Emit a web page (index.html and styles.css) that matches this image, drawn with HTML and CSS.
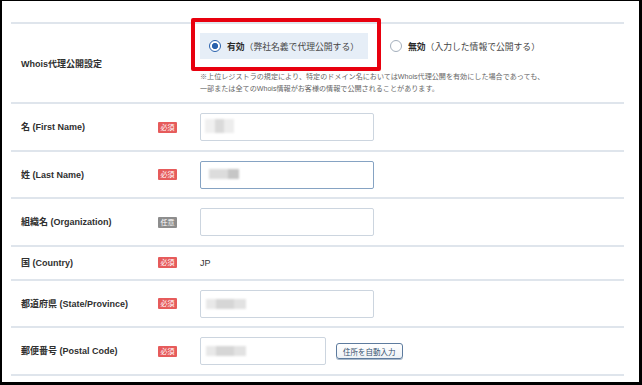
FILE: index.html
```html
<!DOCTYPE html>
<html lang="ja">
<head>
	<meta charset="utf-8">
	<title>Whois情報設定</title>
	<link rel="stylesheet" href="styles.css">
</head>
<body>
	<div class="frame">
		<div class="form-table">
			<div class="row row-whois">
				<div class="label">Whois代理公開設定</div>
				<div class="badge-cell"></div>
				<div class="value">
					<div class="options">
						<div class="option checked">
							<span class="radio"></span>
							<span><b>有効</b>（弊社名義で代理公開する）</span>
							<span class="highlight"></span>
						</div>
						<div class="option">
							<span class="radio"></span>
							<span><b>無効</b>（入力した情報で公開する）</span>
						</div>
					</div>
					<p class="note">※上位レジストラの規定により、特定のドメイン名においてはWhois代理公開を有効にした場合であっても、<br>一部または全てのWhois情報がお客様の情報で公開されることがあります。</p>
				</div>
			</div>

			<div class="row">
				<div class="label">名 (First Name)</div>
				<div class="badge-cell"><span class="badge">必須</span></div>
				<div class="value">
					<div class="field"><span class="blur blur-a"></span></div>
				</div>
			</div>

			<div class="row">
				<div class="label">姓 (Last Name)</div>
				<div class="badge-cell"><span class="badge">必須</span></div>
				<div class="value">
					<div class="field focus"><span class="blur blur-b"></span></div>
				</div>
			</div>

			<div class="row">
				<div class="label">組織名 (Organization)</div>
				<div class="badge-cell"><span class="badge optional">任意</span></div>
				<div class="value">
					<div class="field"></div>
				</div>
			</div>

			<div class="row row-text">
				<div class="label">国 (Country)</div>
				<div class="badge-cell"><span class="badge">必須</span></div>
				<div class="value country">JP</div>
			</div>

			<div class="row">
				<div class="label">都道府県 (State/Province)</div>
				<div class="badge-cell"><span class="badge">必須</span></div>
				<div class="value">
					<div class="field"><span class="blur blur-c"></span></div>
				</div>
			</div>

			<div class="row">
				<div class="label">郵便番号 (Postal Code)</div>
				<div class="badge-cell"><span class="badge">必須</span></div>
				<div class="value value-inline">
					<div class="field short"><span class="blur blur-c"></span></div>
					<button class="btn-auto">住所を自動入力</button>
				</div>
			</div>

			<div class="row row-next">
				<div class="label"></div>
				<div class="badge-cell"></div>
				<div class="value">
					<div class="field"></div>
				</div>
			</div>
		</div>
	</div>
</body>
</html>
```

FILE: styles.css
```css
*{
	margin: 0;
	padding: 0;
	box-sizing: border-box;
}
body{
	font-family: "Liberation Sans", "Noto Sans CJK JP", sans-serif;
	color: #333333;
	background: #ffffff;
}
.frame{
	width: 642px;
	height: 385px;
	border-style: solid;
	border-color: #000000;
	border-width: 1px 3px 3px 2px;
	overflow: hidden;
	background: #ffffff;
}
.form-table{
	margin: 21px 0 0 9px;
	width: 613px;
}
.row{
	display: grid;
	grid-template-columns: 137px 42px 1fr;
	align-items: center;
	padding: 9px 0 8.5px 10px;
	border-top: 2px solid #dfe5ec;
}
.row-whois{
	padding-bottom: 7px;
}
.row-text{
	padding: 10px 0 10px 10px;
}
.label{
	font-size: 9px;
	line-height: 12px;
	font-weight: bold;
	color: #2f2f2f;
	white-space: nowrap;
}
.badge-cell{
	display: flex;
	align-items: center;
}
.badge{
	display: block;
	width: 19px;
	height: 11px;
	line-height: 11px;
	font-size: 7px;
	text-align: center;
	color: #ffffff;
	background: #e65b5b;
	border-radius: 1px;
}
.badge.optional{
	background: #8d8d8d;
}
.options{
	display: flex;
	gap: 13px;
}
.option{
	position: relative;
	display: flex;
	align-items: center;
	gap: 6px;
	height: 26px;
	padding: 0 9px;
	font-size: 8.8px;
	color: #444444;
	white-space: nowrap;
}
.option b{
	color: #2a2a2a;
}
.option.checked{
	background: #e6eef7;
}
.radio{
	width: 12px;
	height: 12px;
	border-radius: 50%;
	border: 1px solid #a4afbc;
	background: #ffffff;
	flex: none;
}
.option.checked .radio{
	border: 1.5px solid #2a62ad;
	background: radial-gradient(circle, #2a62ad 0 2.8px, #ffffff 3.3px);
}
.highlight{
	position: absolute;
	left: -9px;
	top: -15px;
	right: -13px;
	bottom: -12px;
	border: 4px solid #e8000e;
	border-radius: 2px;
}
.note{
	margin-top: 12px;
	font-size: 7.1px;
	line-height: 12px;
	color: #666666;
	white-space: nowrap;
}
.field{
	display: flex;
	align-items: center;
	width: 174px;
	height: 28px;
	padding-left: 5px;
	border: 1px solid #ccd5df;
	border-radius: 2px;
	background: #ffffff;
}
.field.focus{
	border-color: #86a3c3;
}
.field.short{
	width: 126px;
}
.blur{
	display: block;
	height: 10px;
	filter: blur(1px);
}
.blur-a{
	width: 29px;
	height: 14px;
	margin-top: -3px;
	margin-left: -1px;
	background: linear-gradient(90deg, #f0f0f0 0 35%, #dadada 35% 65%, #ededed 65%);
}
.blur-b{
	width: 30px;
	margin-left: 3px;
	margin-top: -2px;
	background: linear-gradient(90deg, #dcdcdc 0 65%, #c6c6c6 65%);
}
.blur-c{
	width: 40px;
	background: linear-gradient(90deg, #e8e8e8 0 25%, #d6d6d6 25% 70%, #e2e2e2 70%);
}
.value-inline{
	display: flex;
	align-items: center;
	gap: 10px;
}
.country{
	font-size: 9px;
	color: #333333;
	line-height: 12px;
}
.btn-auto{
	height: 16px;
	padding: 0 6px;
	font-family: "Liberation Sans", "Noto Sans CJK JP", sans-serif;
	font-size: 7.5px;
	color: #34506e;
	background: linear-gradient(#ffffff, #eef2f6);
	border: 1px solid #5d7b9e;
	border-radius: 3px;
	box-shadow: 0 1px 0 #a9b8c8;
}
```
